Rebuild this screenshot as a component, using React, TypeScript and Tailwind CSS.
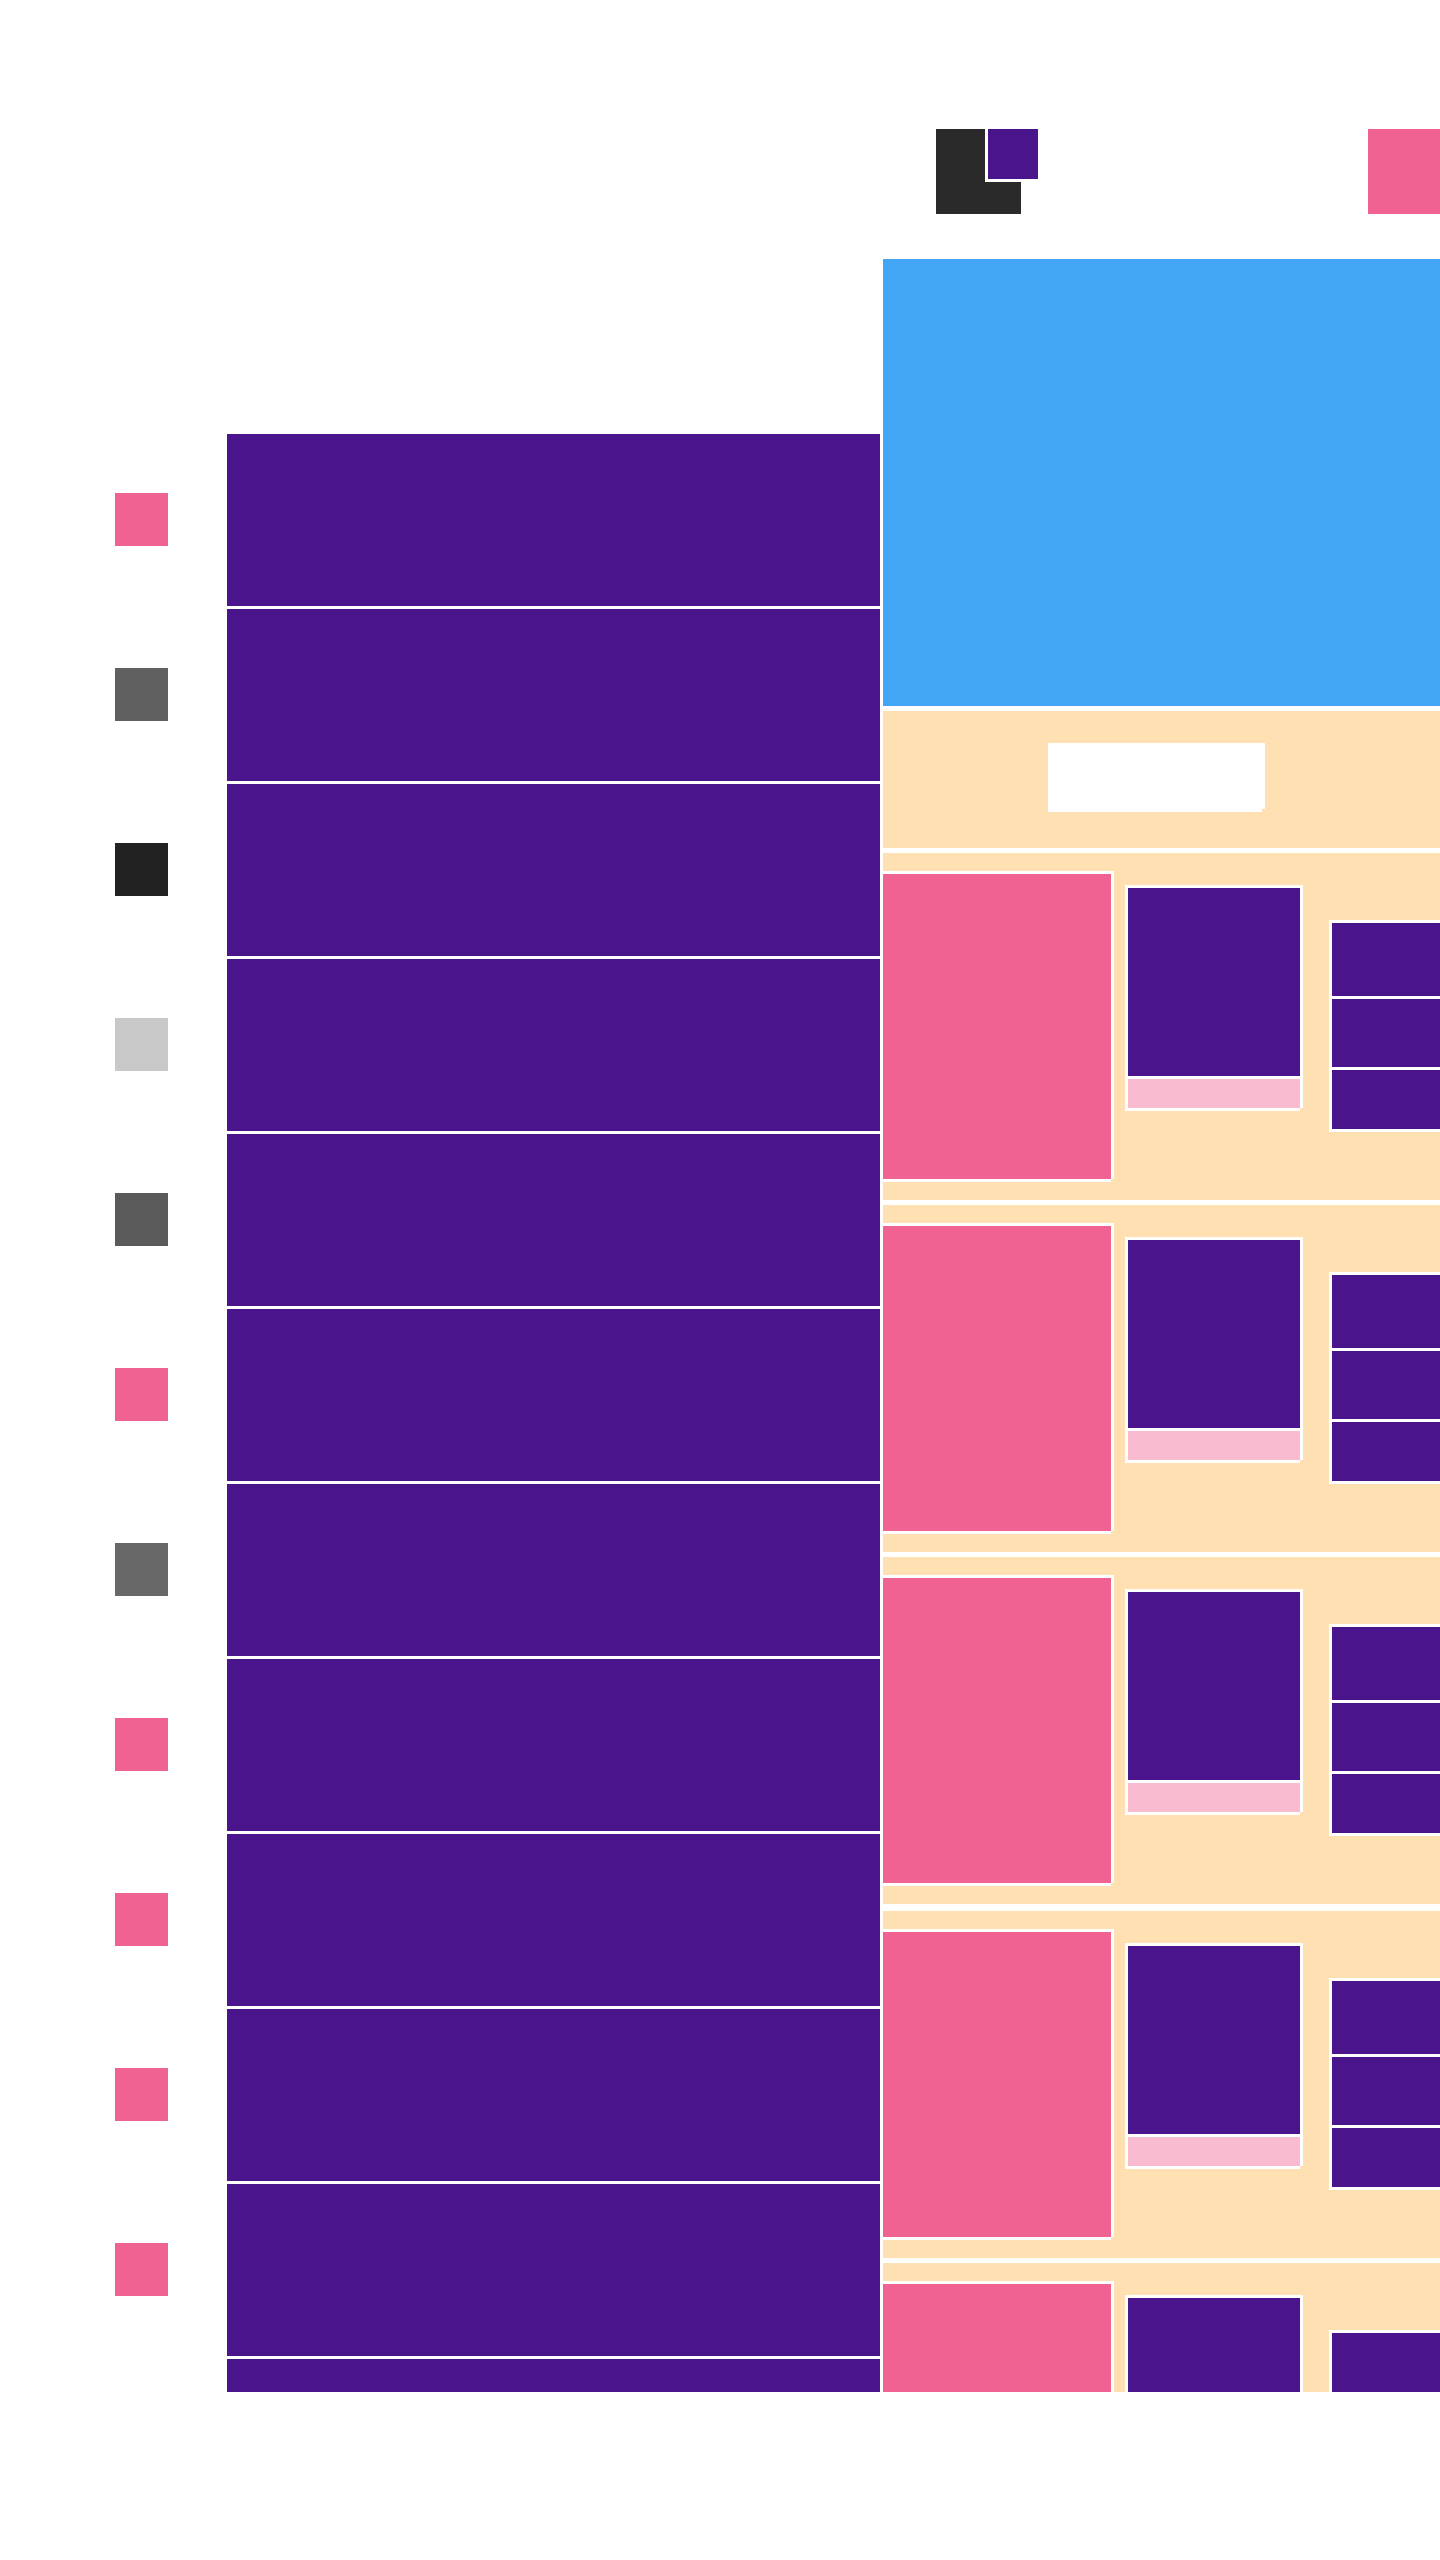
const swatches = [
  "bg-[#f06292]",
  "bg-[#606060]",
  "bg-[#222222]",
  "bg-[#c8c8c8]",
  "bg-[#5a5a5a]",
  "bg-[#f06292]",
  "bg-[#686868]",
  "bg-[#f06292]",
  "bg-[#f06292]",
  "bg-[#f06292]",
  "bg-[#f06292]",
  "bg-white",
];

/* Gap above each card row */
const cards = ["mt-[5px]", "mt-[5px]", "mt-[5px]", "mt-[7px]", "mt-[5px]"];

function SidebarRow({ swatch }: { swatch: string }) {
  return (
    <li className="flex h-[175px] shrink-0 items-start">
      <div className={`mt-[59px] ml-[115px] size-[53px] shrink-0 ${swatch}`} />
      <div className="ml-[59px] h-[172px] grow bg-[#4a148c]" />
    </li>
  );
}

function Header() {
  return (
    <header className="flex h-[259px] shrink-0 items-start pt-[129px] pl-[53px]">
      <div className="relative mr-[347px] size-[85px] shrink-0 bg-[#2a2a2a]">
        <div className="absolute top-0 left-[49px] h-[53px] w-[53px] border-b-3 border-l-3 border-white bg-[#4a148c]" />
      </div>
      <div className="size-[85px] shrink-0 bg-[#f06292]" />
    </header>
  );
}

function Card({ gap }: { gap: string }) {
  return (
    <article className={`flex h-[347px] shrink-0 items-start bg-[#ffe0b2] ${gap}`}>
      <div className="mt-[18px] h-[308px] w-[228px] shrink-0 border-t-3 border-white bg-[#f06292] shadow-[3px_0_0_#fff,0_3px_0_#fff]" />
      <div className="mt-8 ml-[14px] flex w-[175px] shrink-0 flex-col gap-[3px] border-t-3 border-l-3 border-white bg-white shadow-[3px_0_0_#fff,0_3px_0_#fff]">
        <div className="h-[188px] bg-[#4a148c]" />
        <div className="h-[29px] bg-[#f8bbd0]" />
      </div>
      <div className="mt-[67px] ml-[29px] flex grow flex-col gap-[3px] border-y-3 border-l-3 border-white bg-white">
        <div className="h-[73px] bg-[#4a148c]" />
        <div className="h-[68px] bg-[#4a148c]" />
        <div className="h-[59px] bg-[#4a148c]" />
      </div>
    </article>
  );
}

export default function App() {
  return (
    <div className="h-screen bg-white pb-[168px]">
      <div className="grid h-full grid-cols-[minmax(0,883fr)_minmax(0,557fr)] grid-rows-[minmax(0,1fr)] overflow-hidden">
        <aside className="overflow-hidden pt-[434px] pr-[3px]">
          <ul className="flex flex-col">
            {swatches.map((swatch, i) => (
              <SidebarRow key={i} swatch={swatch} />
            ))}
          </ul>
        </aside>
        <main className="flex flex-col overflow-hidden">
          <Header />
          <div className="h-[447px] shrink-0 bg-[#42a5f5]" />
          <div className="mt-[5px] flex h-[137px] shrink-0 items-start bg-[#ffe0b2] pt-8 pl-[165px]">
            <div className="h-[66px] w-[214px] bg-white shadow-[3px_0_0_#fff,0_3px_0_#fff]" />
          </div>
          {cards.map((gap, i) => (
            <Card key={i} gap={gap} />
          ))}
        </main>
      </div>
    </div>
  );
}
